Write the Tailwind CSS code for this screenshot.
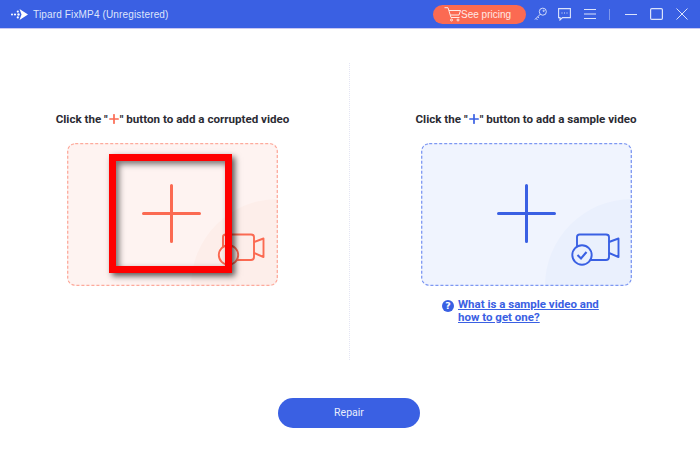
<!DOCTYPE html>
<html><head><meta charset="utf-8">
<script src="https://cdn.jsdelivr.net/npm/@tailwindcss/browser@4"></script>
</head>
<body class="bg-white overflow-hidden font-['Roboto',sans-serif]">
<div class="w-[700px] h-[453px] flex flex-col">
  <header class="h-[29px] shrink-0 bg-[#3a60e3] border-b border-[#c9c6f2] flex items-center text-[#dfe6fb]">
    <svg class="ml-[11px] w-[17px] h-[11px]" viewBox="0 0 17 11" fill="#fff"><path d="M8.5 0 L17 5.5 L8.5 11 L10.5 5.5 Z"/><circle cx="6.8" cy="2.6" r="1.1"/><circle cx="6.8" cy="8.4" r="1.1"/><circle cx="7.5" cy="5.5" r="1.2"/><circle cx="4" cy="5.5" r="1.1"/><circle cx="1" cy="5.5" r="1"/></svg>
    <span class="ml-[5px] text-[10px] tracking-[0.15px] font-['Liberation_Sans',sans-serif]">Tipard FixMP4 (Unregistered)</span>
    <div class="ml-auto flex items-center">
      <div class="w-[93px] h-[19px] rounded-full bg-[#fb6a52] flex items-center text-[#ffe9e4]">
        <svg class="ml-[11px] w-[17px] h-[15px]" viewBox="0 0 17 15" fill="none" stroke="#ffe9e4" stroke-width="1"><path d="M0.5 .7 H4 L7 10.5 H15.5 M5 3.5 H16.5 L15 8 H6.2"/><circle cx="7.5" cy="13" r="1"/><circle cx="14" cy="13" r="1"/></svg>
        <span class="text-[10px] font-['Liberation_Sans',sans-serif]">See pricing</span>
      </div>
      <svg class="ml-[8px] w-[13px] h-[14px]" viewBox="0 0 14 14" fill="none" stroke="#dbe3fb" stroke-width="1"><circle cx="9.5" cy="4.5" r="3.8"/><circle cx="10.4" cy="3.6" r=".7"/><path d="M6.8 7.2 L1 13 M2.2 11.8 L3.8 13.4 M4 10 L5.4 11.4"/></svg>
      <svg class="ml-[11px] w-[13px] h-[13px]" viewBox="0 0 13 13" fill="none" stroke="#dbe3fb" stroke-width="1.1"><path d="M.6.6 H12.4 V9.6 H4.5 L2 12 V9.6 H.6 Z"/><path d="M3.5 5 H4.5 M6 5 H7 M8.5 5 H9.5"/></svg>
      <svg class="ml-[13px] w-[12px] h-[12px]" viewBox="0 0 12 12" fill="none" stroke="#dbe3fb" stroke-width="1"><path d="M0 1.5 H12 M0 6 H12 M0 10.5 H12"/></svg>
      <div class="ml-[13px] w-px h-[11px] bg-[#7f98ec]"></div>
      <svg class="ml-[15px] w-[12px] h-[12px]" viewBox="0 0 12 12" fill="none" stroke="#dbe3fb" stroke-width="1"><path d="M0 6.5 H12"/></svg>
      <svg class="ml-[13px] w-[13px] h-[12px]" viewBox="0 0 13 12" fill="none" stroke="#dbe3fb" stroke-width="1.2"><rect x=".6" y=".6" width="11.8" height="10.8" rx="1.2"/></svg>
      <svg class="ml-[13px] mr-[12px] w-[12px] h-[12px]" viewBox="0 0 12 12" fill="none" stroke="#dbe3fb" stroke-width="1"><path d="M.5.5 L11.5 11.5 M11.5.5 L.5 11.5"/></svg>
    </div>
  </header>

  <main class="flex h-[331px] pt-[34px]">
    <section class="w-[349px] pt-[49px] flex flex-col items-start">
      <h2 class="w-[345px] h-[14px] flex items-center justify-center text-[11.6px] leading-[14px] font-bold text-[#2b2b33] whitespace-nowrap">Click the "<svg class="mx-px w-[10px] h-[10px]" viewBox="0 0 10 10"><path d="M.8 5 H9.2 M5 .8 V9.2" stroke="#fb6a52" stroke-width="1.7" stroke-linecap="round"/></svg>" button to add a corrupted video</h2>
      <div class="relative ml-[67px] mt-[17px] w-[211px] h-[143px] rounded-[8px] bg-[#fef3f1] overflow-hidden">
        <div class="absolute right-0 bottom-0 w-[87px] h-[87px] rounded-tl-full bg-[#fdeeea]"></div>
        <svg class="absolute inset-0 w-[211px] h-[143px]" viewBox="0 0 211 143" fill="none"><rect x=".7" y=".7" width="209.6" height="141.6" rx="7.5" stroke="#fdaa9c" stroke-width="1.3" stroke-dasharray="3 2"/></svg>
        <svg class="absolute left-[75px] top-[41px] w-[59px] h-[59px]" viewBox="0 0 59 59"><path d="M1.5 29.5 H57.5 M29.5 1.5 V57.5" stroke="#fb6a52" stroke-width="3" stroke-linecap="round"/></svg>
        <svg class="absolute left-[149px] top-[90px] w-[50px] h-[34px]" viewBox="0 0 50 34" fill="none" stroke="#fb6a52" stroke-width="1.9"><path d="M7 14 V4 Q7 1.5 9.5 1.5 H35 Q38 1.5 38 4 V24 Q38 27 35 27 H20"/><path d="M38 9 L47.5 5.5 V24 L38 20" stroke-linejoin="round"/><circle cx="12.5" cy="22" r="9.7"/></svg>
      </div>
    </section>
    <div class="w-px h-[297px] border-l border-dotted border-[#e4e5f4]"></div>
    <section class="w-[350px] pt-[49px] flex flex-col items-start">
      <h2 class="w-[352px] h-[14px] flex items-center justify-center text-[11.6px] leading-[14px] font-bold text-[#2b2b33] whitespace-nowrap">Click the "<svg class="mx-px w-[10px] h-[10px]" viewBox="0 0 10 10"><path d="M.8 5 H9.2 M5 .8 V9.2" stroke="#3a60e3" stroke-width="1.7" stroke-linecap="round"/></svg>" button to add a sample video</h2>
      <div class="relative ml-[71px] mt-[17px] w-[211px] h-[143px] rounded-[8px] bg-[#f0f4fe] overflow-hidden">
        <div class="absolute right-0 bottom-0 w-[87px] h-[87px] rounded-tl-full bg-[#eaf0fd]"></div>
        <svg class="absolute inset-0 w-[211px] h-[143px]" viewBox="0 0 211 143" fill="none"><rect x=".7" y=".7" width="209.6" height="141.6" rx="7.5" stroke="#7d97f2" stroke-width="1.3" stroke-dasharray="3 2"/></svg>
        <svg class="absolute left-[76px] top-[41px] w-[59px] h-[59px]" viewBox="0 0 59 59"><path d="M1.5 29.5 H57.5 M29.5 1.5 V57.5" stroke="#3a60e3" stroke-width="3" stroke-linecap="round"/></svg>
        <svg class="absolute left-[150px] top-[90px] w-[50px] h-[34px]" viewBox="0 0 50 34" fill="none" stroke="#3a60e3" stroke-width="1.9"><path d="M6 14 V4 Q6 1.5 8.5 1.5 H35 Q38 1.5 38 4 V24 Q38 27 35 27 H20"/><path d="M38 9 L47.5 5.5 V24 L38 20" stroke-linejoin="round"/><circle cx="11" cy="22" r="9.7" fill="#eaf0fd"/><path d="M6.5 22 L10 25.5 L15.5 19" stroke-width="2.1"/></svg>
      </div>
      <div class="ml-[92px] mt-[12px] flex items-start">
        <svg class="mt-[2px] w-[12px] h-[12px] shrink-0" viewBox="0 0 12 12"><circle cx="6" cy="6" r="6" fill="#3a60e3"/><text x="6" y="9.4" text-anchor="middle" fill="#fff" font-size="9.5" font-weight="700" font-family="DejaVu Sans">?</text></svg>
        <a class="ml-[4px] text-[11.5px] leading-[12.5px] font-bold text-[#3a60e3] underline whitespace-nowrap">What is a sample video and<br>how to get one?</a>
      </div>
    </section>
  </main>

  <footer class="flex justify-center pt-[38px]">
    <button class="w-[142px] h-[30px] -ml-[2px] rounded-full bg-[#3a60e3] text-[#e8edfc] text-[10.5px]">Repair</button>
  </footer>
</div>
<div class="absolute left-[109px] top-[154px] w-[123px] h-[119px] border-[7px] border-[#ff0000] shadow-[3px_3px_6px_rgba(0,0,0,0.65),inset_3px_3px_6px_rgba(0,0,0,0.55)]"></div>
</body></html>
